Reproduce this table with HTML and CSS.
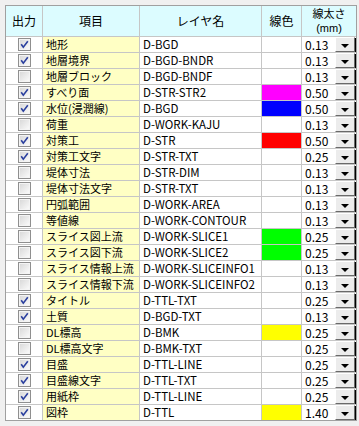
FILE: index.html
```html
<!DOCTYPE html>
<html lang="ja">
<head>
<meta charset="utf-8">
<title>レイヤ設定</title>
<link rel="stylesheet" href="styles.css">
</head>
<body>
<div class="grid" id="grid">
  <div class="hd">出力</div>
  <div class="hd">項目</div>
  <div class="hd">レイヤ名</div>
  <div class="hd">線色</div>
  <div class="hd hd-two"><span>線太さ</span><span class="unit">(mm)</span></div>
</div>
<script src="app.js"></script>
</body>
</html>
```

FILE: styles.css
```css
html, body {
  margin: 0;
  padding: 0;
  background: #f0f0f0;
}
body {
  padding: 5px 0 0 5px;
  font-family: "Noto Sans CJK JP", "Liberation Sans", sans-serif;
  font-size: 12px;
  color: #000;
}
.grid {
  display: grid;
  width: 350px;
  grid-template-columns: 36px 96px 121px 39px 54px;
  grid-template-rows: 30px repeat(24, 15px);
  gap: 1px;
  background: #c6c6c6;
  border: 1px solid #a0a0a0;
}
.hd {
  background: #dcfcff;
  display: flex;
  align-items: center;
  justify-content: center;
  font-size: 12px;
  line-height: 14px;
}
.hd-two {
  flex-direction: column;
  font-size: 11px;
  line-height: 15px;
}
.unit {
  font-family: "Liberation Sans", sans-serif;
  font-size: 11px;
  line-height: 15px;
}
.cell {
  background: #fff;
  display: flex;
  align-items: center;
  overflow: hidden;
  white-space: nowrap;
  line-height: 15px;
}
.chk {
  justify-content: center;
}
.item {
  background: #ffffc4;
  padding-left: 3px;
  font-size: 11px;
}
.layer {
  padding-left: 3px;
  font-size: 11.5px;
}
.color {
  padding: 0;
}
.width {
  justify-content: space-between;
  padding-left: 3px;
  font-size: 12px;
}
.btn {
  width: 18px;
  height: 13px;
  background: #ececec;
  border-top: 1px solid #fff;
  border-left: 1px solid #fff;
  border-right: 1px solid #6a6a6a;
  border-bottom: 1px solid #6a6a6a;
  box-shadow: 1px 1px 0 #000;
  margin-right: 1px;
  display: flex;
  align-items: center;
  justify-content: center;
  align-self: flex-start;
}
.tri {
  width: 0;
  height: 0;
  border-left: 4px solid transparent;
  border-right: 4px solid transparent;
  border-top: 4px solid #000;
  margin-top: 2px;
}
.box svg {
  display: block;
}
```

FILE: app.js
```js
const rows = [
  ["地形", 1, "D-BGD", "", "0.13"],
  ["地層境界", 1, "D-BGD-BNDR", "", "0.13"],
  ["地層ブロック", 0, "D-BGD-BNDF", "", "0.13"],
  ["すべり面", 1, "D-STR-STR2", "#ff00ff", "0.50"],
  ["水位(浸潤線)", 1, "D-BGD", "#0000ff", "0.50"],
  ["荷重", 0, "D-WORK-KAJU", "", "0.13"],
  ["対策工", 1, "D-STR", "#ff0000", "0.50"],
  ["対策工文字", 1, "D-STR-TXT", "", "0.25"],
  ["堤体寸法", 0, "D-STR-DIM", "", "0.13"],
  ["堤体寸法文字", 0, "D-STR-TXT", "", "0.13"],
  ["円弧範囲", 0, "D-WORK-AREA", "", "0.13"],
  ["等値線", 0, "D-WORK-CONTOUR", "", "0.13"],
  ["スライス図上流", 0, "D-WORK-SLICE1", "#00ff00", "0.25"],
  ["スライス図下流", 0, "D-WORK-SLICE2", "#00ff00", "0.25"],
  ["スライス情報上流", 0, "D-WORK-SLICEINFO1", "", "0.13"],
  ["スライス情報下流", 0, "D-WORK-SLICEINFO2", "", "0.13"],
  ["タイトル", 1, "D-TTL-TXT", "", "0.25"],
  ["土質", 1, "D-BGD-TXT", "", "0.13"],
  ["DL標高", 0, "D-BMK", "#ffff00", "0.25"],
  ["DL標高文字", 0, "D-BMK-TXT", "", "0.25"],
  ["目盛", 1, "D-TTL-LINE", "", "0.25"],
  ["目盛線文字", 1, "D-TTL-TXT", "", "0.25"],
  ["用紙枠", 1, "D-TTL-LINE", "", "0.25"],
  ["図枠", 1, "D-TTL", "#ffff00", "1.40"]
];

const boxSvg = (checked) =>
  '<svg width="13" height="13" viewBox="0 0 13 13">' +
  '<defs><linearGradient id="g" x1="0" y1="0" x2="1" y2="1">' +
  '<stop offset="0" stop-color="#d8d8d8"/><stop offset="1" stop-color="#fbfbfb"/></linearGradient></defs>' +
  '<rect x="0.5" y="0.5" width="12" height="12" fill="#fff" stroke="#8f8f8f"/>' +
  '<rect x="1.5" y="1.5" width="10" height="10" fill="url(#g)" stroke="#f4f4f4"/>' +
  (checked ? '<path d="M3.2 6.2 L5.3 9.2 L9.8 3.2" fill="none" stroke="#2a3f9e" stroke-width="1.6"/>' : '') +
  '</svg>';

const grid = document.getElementById("grid");
rows.forEach(([item, chk, layer, color, w]) => {
  const add = (cls, html, style) => {
    const d = document.createElement("div");
    d.className = "cell " + cls;
    d.innerHTML = html;
    if (style) d.style.background = style;
    grid.appendChild(d);
  };
  add("chk", '<span class="box">' + boxSvg(chk) + '</span>');
  add("item", item);
  add("layer", layer);
  add("color", "", color || "");
  add("width", '<span>' + w + '</span><span class="btn"><span class="tri"></span></span>');
});
```
